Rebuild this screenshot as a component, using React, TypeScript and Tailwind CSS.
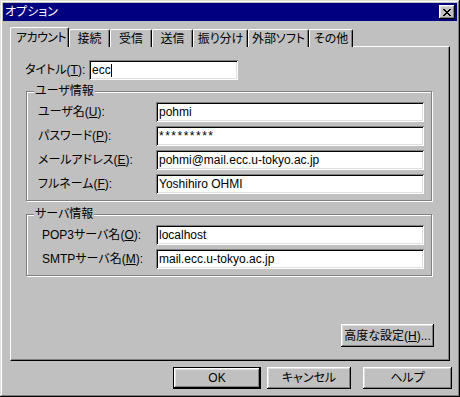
const raised =
  "shadow-[inset_-1px_-1px_#000,inset_1px_1px_#fff,inset_-2px_-2px_#808080,inset_2px_2px_#dfdfdf]";
const sunken =
  "shadow-[inset_1px_1px_#808080,inset_-1px_-1px_#fff,inset_2px_2px_#000,inset_-2px_-2px_#dfdfdf]";

const tabs = [
  { label: "アカウント", w: "w-[59px]", active: true },
  { label: "接続", w: "w-[41px]" },
  { label: "受信", w: "w-[42px]" },
  { label: "送信", w: "w-[41px]" },
  { label: "振り分け", w: "w-[55px]" },
  { label: "外部ソフト", w: "w-[61px]" },
  { label: "その他", w: "w-[44px]" },
];

const Label = ({ text, keyChar }: { text: string; keyChar: string }) => (
  <span className="whitespace-nowrap">
    {text}(<u>{keyChar}</u>):
  </span>
);

const TextBox = ({
  value,
  w,
  caret,
  extra = "",
}: {
  value: string;
  w: string;
  caret?: boolean;
  extra?: string;
}) => (
  <div className={`${w} h-[20px] bg-white ${sunken} flex items-center pl-[3px] whitespace-nowrap ${extra}`}>
    {value}
    {caret && <span className="inline-block w-[1px] h-[13px] bg-black" />}
  </div>
);

const Row = ({
  text,
  keyChar,
  value,
  labelW,
  extra,
}: {
  text: string;
  keyChar: string;
  value: string;
  labelW: string;
  extra?: string;
}) => (
  <div className="flex items-center h-[20px]">
    <div className={labelW}>
      <Label text={text} keyChar={keyChar} />
    </div>
    <TextBox value={value} w="w-[268px]" extra={extra} />
  </div>
);

const Group = ({ title, children, h }: { title: string; children: React.ReactNode; h: string }) => (
  <div
    className={`relative ml-[15px] w-[406px] ${h} border border-[#808080] shadow-[1px_1px_0_#fff,inset_1px_1px_0_#fff]`}
  >
    <span className="absolute left-[7px] top-[-9px] px-[1px] bg-[#c0c0c0] leading-[16px]">{title}</span>
    {children}
  </div>
);

const Button = ({ children, w, def }: { children: React.ReactNode; w: string; def?: boolean }) =>
  def ? (
    <div className={`${w} h-[22px] border border-black`}>
      <div className={`w-full h-full ${raised} flex items-center justify-center`}>{children}</div>
    </div>
  ) : (
    <div className={`${w} h-[22px] ${raised} flex items-center justify-center`}>{children}</div>
  );

export default function App() {
  return (
    <div
      className="w-[460px] h-[397px] bg-[#c0c0c0] p-[3px] flex flex-col text-black text-[12px] leading-none [font-feature-settings:'palt'] shadow-[inset_-1px_-1px_#000,inset_1px_1px_#dfdfdf,inset_-2px_-2px_#808080,inset_2px_2px_#fff]"
      style={{ fontFamily: '"Liberation Sans", "Noto Sans CJK JP", sans-serif' }}
    >
      {/* title bar */}
      <div className="h-[18px] bg-[#000080] flex items-center justify-between pl-[2px] pr-[2px]">
        <span className="text-white">オプション</span>
        <div className={`w-[16px] h-[14px] bg-[#c0c0c0] ${raised} flex items-center justify-center`}>
          <svg width="8" height="7" viewBox="0 0 8 7" shapeRendering="crispEdges">
            <path d="M0 0h2v1H0zM6 0h2v1H6zM1 1h2v1H1zM5 1h2v1H5zM2 2h4v1H2zM3 3h2v1H3zM2 4h4v1H2zM1 5h2v1H1zM5 5h2v1H5zM0 6h2v1H0zM6 6h2v1H6z" fill="#000" />
          </svg>
        </div>
      </div>

      {/* tabs */}
      <div className="mt-[6px] ml-[7px] h-[20px] flex items-end relative z-10">
        {tabs.map((t) => (
          <div
            key={t.label}
            className={`${t.w} ${t.active ? "h-[20px] pl-[5px] tracking-[-0.6px]" : "h-[18px] justify-center"} shrink-0 whitespace-nowrap flex items-center bg-[#c0c0c0] border-l border-t border-r border-white border-r-black rounded-t-[2px] shadow-[inset_-1px_0_#808080]`}
          >
            {t.label}
          </div>
        ))}
      </div>

      {/* panel */}
      <div className="-mt-[1px] ml-[7px] w-[440px] h-[315px] border border-white border-r-black border-b-black shadow-[inset_-1px_-1px_#808080] flex flex-col">
        <div className="mt-[13px] ml-[14px] flex items-center h-[20px]">
          <div className="w-[64px]">
            <Label text="タイトル" keyChar="T" />
          </div>
          <TextBox value="ecc" w="w-[149px]" caret />
        </div>

        <div className="mt-[11px]">
          <Group title="ユーザ情報" h="h-[110px]">
            <div className="pt-[10px] pl-[11px] flex flex-col gap-[4px]">
              <Row text="ユーザ名" keyChar="U" value="pohmi" labelW="w-[118px]" />
              <Row
                text="パスワード"
                keyChar="P"
                value="*********"
                labelW="w-[118px]"
                extra="tracking-[1.5px]"
              />
              <Row text="メールアドレス" keyChar="E" value="pohmi@mail.ecc.u-tokyo.ac.jp" labelW="w-[118px]" />
              <Row text="フルネーム" keyChar="F" value="Yoshihiro OHMI" labelW="w-[118px]" />
            </div>
          </Group>
        </div>

        <div className="mt-[13px]">
          <Group title="サーバ情報" h="h-[62px]">
            <div className="pt-[10px] pl-[15px] flex flex-col gap-[4px]">
              <Row text="POP3サーバ名" keyChar="O" value="localhost" labelW="w-[114px]" />
              <Row text="SMTPサーバ名" keyChar="M" value="mail.ecc.u-tokyo.ac.jp" labelW="w-[114px]" />
            </div>
          </Group>
        </div>

        <div className="mt-[48px] ml-[330px]">
          <div className={`w-[93px] h-[23px] ${raised} flex items-center justify-center whitespace-nowrap`}>
            高度な設定(<u>H</u>)...
          </div>
        </div>
      </div>

      {/* dialog buttons */}
      <div className="mt-[6px] ml-[170px] flex">
        <Button w="w-[88px]" def>
          OK
        </Button>
        <div className="ml-[6px]">
          <Button w="w-[84px]">キャンセル</Button>
        </div>
        <div className="ml-[12px]">
          <Button w="w-[89px]">ヘルプ</Button>
        </div>
      </div>
    </div>
  );
}
